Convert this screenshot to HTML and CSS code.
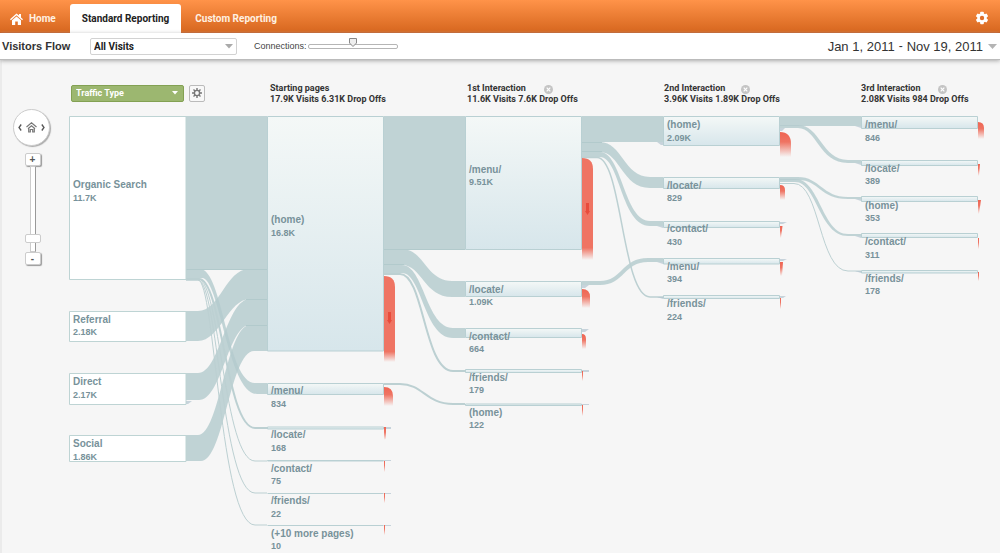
FILE: index.html
```
<!DOCTYPE html>
<html lang="en">

	<head>
		<meta charset="UTF-8">
		<title>Visitors Flow</title>
		<link rel="stylesheet" href="styles.css">
	</head>

	<body>
		<header class="top">
			<nav class="tabs">
				<a class="tab home" href="#">
					<svg width="13" height="12" viewBox="0 0 13 12"><path d="M0 6.2 6.5 0.4 9 2.6V1h2v3.4l2 1.8-.9 1L6.5 2.3.9 7.2z" fill="#fff"/><path d="M2 7.3 6.5 3.4 11 7.3V12H7.8V8.5H5.2V12H2z" fill="#fff"/></svg>
					Home
				</a>
				<a class="tab active" href="#">Standard Reporting</a>
				<a class="tab" href="#">Custom Reporting</a>
			</nav>
			<button class="settings" aria-label="Settings">
				<svg width="14" height="14" viewBox="-7 -7 14 14"><g fill="#fff"><rect x="-1.8" y="-6.2" width="3.6" height="12.4" rx=".8"/><rect x="-1.8" y="-6.2" width="3.6" height="12.4" rx=".8" transform="rotate(60)"/><rect x="-1.8" y="-6.2" width="3.6" height="12.4" rx=".8" transform="rotate(120)"/></g><circle r="3.5" fill="none" stroke="#fff" stroke-width="2.6"/><circle r="2.2" fill="#df6f2b"/></svg>
			</button>
		</header>

		<div class="toolbar">
			<h1>Visitors Flow</h1>
			<select class="segment" aria-label="Segment">
				<option>All Visits</option>
			</select>
			<label class="conn-label" for="conn">Connections:</label>
			<input class="conn" id="conn" type="range" min="0" max="100" value="50">
			<button class="dates">
				<span>Jan 1, 2011</span><span class="dash">-</span><span>Nov 19, 2011</span>
				<svg class="arrow" width="9" height="5" viewBox="0 0 9 5"><path d="M0 0h9L4.5 5z" fill="#b4b4b4"/></svg>
			</button>
		</div>

		<main class="content">
			<aside class="controls">
				<div class="pad">
					<button aria-label="Left"><svg width="4" height="7" viewBox="0 0 4 7"><path d="M3.2.5 1 3.5l2.2 3" fill="none" stroke="#555" stroke-width="1.3"/></svg></button>
					<button aria-label="Start"><svg width="11" height="11" viewBox="0 0 11 11"><path d="M.5 5 5.5.9l5 4.1M2 6.8l3.5-3 3.5 3M2.7 6.5V10h1.6V7.5h2.4V10h1.6V6.5" fill="none" stroke="#777" stroke-width="1.2"/></svg></button>
					<button aria-label="Right"><svg width="4" height="7" viewBox="0 0 4 7"><path d="M.8.5 3 3.5l-2.2 3" fill="none" stroke="#555" stroke-width="1.3"/></svg></button>
				</div>
				<div class="zoom">
					<button>+</button>
					<input type="range" min="0" max="100" value="11" aria-label="Zoom">
					<button>-</button>
				</div>
			</aside>

			<section class="flow">
				<div class="heads">
					<div class="dimension">
						<select class="type" aria-label="Dimension">
							<option>Traffic Type</option>
						</select>
						<button class="gear" aria-label="Dimension settings">
							<svg width="10" height="10" viewBox="-5 -5 10 10"><g stroke="#777" stroke-width="1.4"><path d="M0-5V5M-5 0H5M-3.5-3.5l7 7M-3.5 3.5l7-7"/></g><circle r="2.6" fill="#f8f8f8" stroke="#777" stroke-width="1.4"/></svg>
						</button>
					</div>
					<div class="head">
						<h2>Starting pages</h2>
						<p>17.9K Visits 6.31K Drop Offs</p>
					</div>
					<div class="head">
						<h2>1st Interaction</h2>
						<p>11.6K Visits 7.6K Drop Offs</p>
						<button class="close" aria-label="Remove"><svg width="9" height="9" viewBox="0 0 9 9"><circle cx="4.5" cy="4.5" r="4.5" fill="#c4c4c4"/><path d="M2.7 2.7l3.6 3.6M6.3 2.7 2.7 6.3" stroke="#fff" stroke-width="1.2"/></svg></button>
					</div>
					<div class="head">
						<h2>2nd Interaction</h2>
						<p>3.96K Visits 1.89K Drop Offs</p>
						<button class="close" aria-label="Remove"><svg width="9" height="9" viewBox="0 0 9 9"><circle cx="4.5" cy="4.5" r="4.5" fill="#c4c4c4"/><path d="M2.7 2.7l3.6 3.6M6.3 2.7 2.7 6.3" stroke="#fff" stroke-width="1.2"/></svg></button>
					</div>
					<div class="head">
						<h2>3rd Interaction</h2>
						<p>2.08K Visits 984 Drop Offs</p>
						<button class="close" aria-label="Remove"><svg width="9" height="9" viewBox="0 0 9 9"><circle cx="4.5" cy="4.5" r="4.5" fill="#c4c4c4"/><path d="M2.7 2.7l3.6 3.6M6.3 2.7 2.7 6.3" stroke="#fff" stroke-width="1.2"/></svg></button>
					</div>
				</div>

				<svg class="chart" width="931" height="443" viewBox="69 110 931 443">
					<defs>
						<linearGradient id="box" x1="0" y1="0" x2="0" y2="1">
							<stop offset="0" stop-color="#f4f8f7"/>
							<stop offset="1" stop-color="#d7e6eb"/>
						</linearGradient>
						<linearGradient id="drop" x1="0" y1="0" x2="0" y2="1">
							<stop offset="0" stop-color="#ef7463"/>
							<stop offset=".88" stop-color="#ef7463"/>
							<stop offset="1" stop-color="#ef7463" stop-opacity="0"/>
						</linearGradient>
						<linearGradient id="dropSmall" x1="0" y1="0" x2="0" y2="1">
							<stop offset="0" stop-color="#ef6553"/>
							<stop offset=".4" stop-color="#ef7463"/>
							<stop offset="1" stop-color="#ef7463" stop-opacity="0"/>
						</linearGradient>
					</defs>

					<!-- traffic type -> starting pages -->
					<g class="ribbon">
						<path d="M186 116H267V269H186z"/>
						<path d="M186 311H198C220 311 226 269 249 269H267V299H250C228 299 220 341 198 341H186z"/>
						<path d="M186 373H198C220 373 226 299 250 299H267V325H250C228 325 222 400 199 400H186z"/>
						<path d="M186 435H198C220 435 226 325 250 325H267V351H254C230 351 224 461 201 461H186z"/>
						<path d="M186 269H200C223 269 227 383 255 383H267V394H257C228 394 220 278 202 278H186z"/>
					</g>
					<g class="line">
						<path d="M186 279H199C222 279 226 428 255 428H267" stroke-width="2"/>
						<path d="M186 279H198C220 279 224 461 255 461H267"/>
						<path d="M186 280H198C218 280 222 493 255 493H267"/>
						<path d="M186 280H198C215 280 220 525 255 525H267"/>
					</g>

					<!-- starting pages -> 1st interaction -->
					<g class="ribbon">
						<path d="M384 116H465V249H384z"/>
						<path d="M384 249H402C424 249 426 281 452 281H465V297H452C424 297 422 265 402 265H384z"/>
						<path d="M384 265H402C424 265 426 328 453 328H465V338H453C424 338 422 273 402 273H384z"/>
					</g>
					<g class="line">
						<path d="M384 274H400C424 274 424 371 453 371H465" stroke-width="2"/>
						<path d="M384 384H400C423 384 426 404 453 404H465" stroke-width="2"/>
					</g>

					<!-- 1st -> 2nd interaction -->
					<g class="ribbon">
						<path d="M582 116H663V142H582z"/>
						<path d="M582 142H600C622 142 624 177 650 177H663V188H650C622 188 620 152 600 152H582z"/>
						<path d="M582 152H600C622 152 624 221 650 221H663V226H650C621 226 620 157 600 157H582z"/>
						<path d="M582 281H600C622 281 622 258 648 258H663V262H648C624 262 624 285 600 285H582z"/>
					</g>
					<g class="line">
						<path d="M582 157.5H597C622 157.5 622 297 650 297H663" stroke-width="1.5"/>
					</g>

					<!-- 2nd -> 3rd interaction -->
					<g class="ribbon">
						<path d="M780 116H861V126H780z"/>
						<path d="M780 125H798C820 125 822 160 848 160H861V163H848C819 163 817 128 798 128H780z"/>
						<path d="M780 177H798C820 177 822 197 848 197H861V199H848C819 199 820 180 798 180H780z"/>
						<path d="M780 179H795C820 179 822 234 848 234H861V236H848C819 236 817 182 795 182H780z"/>
					</g>
					<g class="line">
						<path d="M780 183.5H794C820 183.5 819 271 848 271H861"/>
					</g>

					<path class="seam" d="M186 269.500H267M246 299.500H267M246 325.500H267M384 249.500H465M384 264.500H404M582 142.500H602M582 151.500H602"/>

					<!-- shade where a band is thinner than its box -->
					<path class="shade" d="M186 401h6l-4 3h-2zM582 285h7l-4 3h-3zM582 329h7l-4 3h-3zM780 128h5l-3 3h-2zM780 222h7l-4 2h-3zM780 259h7l-4 2h-3zM780 296h6l-3 2h-3zM384 427h7v2h-7zM384 460h7v1h-7zM384 493h7v1h-7zM384 525h7v1h-7zM582 370h7v2h-7zM582 404h7v1h-7z"/>
					<path class="shade" d="M657 142h6v3h-2zM657 226h6v2zM657 262h6v2zM657 297h6v2zM855 126h6v2zM855 163h6v2zM855 199h6v2zM855 236h6v2zM855 271h6v2z"/>

					<!-- boxes -->
					<g class="source">
						<path d="M69.5 116.5H186V279.5H69.5z"/>
						<path d="M69.5 311.5H186V341.5H69.5z"/>
						<path d="M69.5 373.5H186V404.5H69.5z"/>
						<path d="M69.5 435.5H186V461.5H69.5z"/>
					</g>
					<g class="box">
						<path d="M267.5 116.5H383.5V351H267.5z"/>
						<path d="M267.5 383.5H383.5V394.5H267.5z"/>
						<path d="M267.5 427H383.5V429H267.5z"/>
						<path d="M267.5 460.5H383.5V461H267.5z"/>
						<path d="M267.5 493.5H383.5"/>
						<path d="M267.5 525.5H383.5"/>

						<path d="M465.5 116.5H581.5V249.5H465.5z"/>
						<path d="M465.5 281.5H581.5V296.5H465.5z"/>
						<path d="M465.5 328.5H581.5V337.5H465.5z"/>
						<path d="M465.5 369.5H581.5V372.5H465.5z"/>
						<path d="M465.5 404H581.5V405.5H465.5z"/>

						<path d="M663.5 116.5H779.5V145.5H663.5z"/>
						<path d="M663.5 177.5H779.5V188.5H663.5z"/>
						<path d="M663.5 221.5H779.5V227.5H663.5z"/>
						<path d="M663.5 258.5H779.5V264H663.5z"/>
						<path d="M663.5 295.5H779.5V298.5H663.5z"/>

						<path d="M861.5 116.5H977.5V128.5H861.5z"/>
						<path d="M861.5 160.5H977.5V165.5H861.5z"/>
						<path d="M861.5 196.5H977.5V201.5H861.5z"/>
						<path d="M861.5 233.5H977.5V237.5H861.5z"/>
						<path d="M861.5 270.5H977.5V273H861.5z"/>
					</g>

					<!-- drop offs -->
					<g fill="url(#drop)">
						<path d="M384 276Q395 276 395 287V362H384z"/>
						<path d="M582 158Q593 158 593 169V260H582z"/>
					</g>
					<g fill="url(#dropSmall)">
						<path d="M780 132Q791 132 791 144V157H780z"/>
						<path d="M384 387Q393 387 393 396V406H384z"/>
						<path d="M384 427H386V439L384 440z"/>
						<path d="M384 461H385V472H384z"/>
						<path d="M384 493H385V503H384z"/>
						<path d="M384 525H385V535H384z"/>
						<path d="M582 289Q590 289 590 297V308H582z"/>
						<path d="M582 334Q586 334 586 339V349H582z"/>
						<path d="M582 371H583V381H582z"/>
						<path d="M582 405H583V416H582z"/>
						<path d="M780 185Q785 185 785 190V200H780z"/>
						<path d="M780 226H782.5L781 238H780z"/>
						<path d="M780 262H783L782 276H780z"/>
						<path d="M780 298H781V309H780z"/>
						<path d="M978 122Q984 122 984 128V139H978z"/>
						<path d="M978 164H980L979 176H978z"/>
						<path d="M978 200H981L979 214H978z"/>
						<path d="M978 238H979V249H978z"/>
						<path d="M978 272H979V281H978z"/>
					</g>
					<path fill="#e84c3c" d="M388 312h3v8h1l-2.5 4-2.5-4h1zM586 203h3v8h1l-2.5 4-2.5-4h1z"/>

					<g class="name">
						<text x="73" y="188">Organic Search</text>
						<text x="73" y="323">Referral</text>
						<text x="73" y="385">Direct</text>
						<text x="73" y="447">Social</text>
						<text x="271" y="223">(home)</text>
						<text x="271" y="394">/menu/</text>
						<text x="271" y="438">/locate/</text>
						<text x="271" y="472">/contact/</text>
						<text x="271" y="504">/friends/</text>
						<text x="271" y="537">(+10 more pages)</text>
						<text x="469" y="173">/menu/</text>
						<text x="469" y="293">/locate/</text>
						<text x="469" y="340">/contact/</text>
						<text x="469" y="381">/friends/</text>
						<text x="469" y="416">(home)</text>
						<text x="667" y="128">(home)</text>
						<text x="667" y="189">/locate/</text>
						<text x="667" y="232">/contact/</text>
						<text x="667" y="270">/menu/</text>
						<text x="667" y="307">/friends/</text>
						<text x="865" y="128">/menu/</text>
						<text x="865" y="172">/locate/</text>
						<text x="865" y="209">(home)</text>
						<text x="865" y="245">/contact/</text>
						<text x="865" y="282">/friends/</text>
					</g>
					<g class="value">
						<text x="73" y="201">11.7K</text>
						<text x="73" y="335">2.18K</text>
						<text x="73" y="398">2.17K</text>
						<text x="73" y="460">1.86K</text>
						<text x="271" y="236">16.8K</text>
						<text x="271" y="407">834</text>
						<text x="271" y="451">168</text>
						<text x="271" y="484">75</text>
						<text x="271" y="517">22</text>
						<text x="271" y="549">10</text>
						<text x="469" y="185">9.51K</text>
						<text x="469" y="305">1.09K</text>
						<text x="469" y="352">664</text>
						<text x="469" y="393">179</text>
						<text x="469" y="428">122</text>
						<text x="667" y="141">2.09K</text>
						<text x="667" y="201">829</text>
						<text x="667" y="245">430</text>
						<text x="667" y="282">394</text>
						<text x="667" y="320">224</text>
						<text x="865" y="141">846</text>
						<text x="865" y="184">389</text>
						<text x="865" y="221">353</text>
						<text x="865" y="258">311</text>
						<text x="865" y="294">178</text>
					</g>
				</svg>
			</section>
		</main>
	</body>

</html>
```

FILE: styles.css
```
* {
	padding: 0;
	margin: 0;
	box-sizing: border-box;
}

body {
	font-family: "Liberation Sans", Arial, sans-serif;
	font-size: 9px;
	color: #333;
	background: #f6f6f6;
	overflow-x: hidden;
}

button {
	background: none;
	border: none;
	font-family: inherit;
	cursor: pointer;
}

svg {
	display: block;
}

.top {
	display: flex;
	justify-content: space-between;
	height: 33px;
	background: linear-gradient(#ff9349, #d7671f);
	border-bottom: 1px solid #c9591a;
	padding-top: 4px;
}

.tabs {
	display: flex;
	height: 29px;
}

.tab {
	display: flex;
	align-items: center;
	gap: 6px;
	padding: 0 14px;
	font-family: Roboto, Arial, sans-serif;
	font-size: 10px;
	font-weight: bold;
	color: #fff1e2;
	text-decoration: none;
}

.tab.home {
	padding-left: 10px;
}

.tab.active {
	padding: 0 12px;
	background: #fff;
	color: #222;
	border-radius: 3px 3px 0 0;
}

.settings {
	padding-right: 11px;
}

.toolbar {
	display: flex;
	align-items: center;
	height: 27px;
	padding-left: 2px;
	background: #fff;
	border-bottom: 1px solid #bbb;
	box-shadow: 0 1px 4px #aaa;
	position: relative;
}

h1 {
	font-size: 11px;
	width: 88px;
}

.segment {
	appearance: none;
	width: 147px;
	height: 17px;
	padding-left: 3px;
	border: 1px solid #d2d2d2;
	border-radius: 2px;
	background: #fff url('data:image/svg+xml,<svg xmlns="http://www.w3.org/2000/svg" width="8" height="5"><path d="M0 0h8L4 4.5z" fill="%23aaa"/></svg>') no-repeat right 3px center;
	font-family: Roboto, Arial, sans-serif;
	font-size: 10px;
	font-weight: bold;
	color: #222;
}

.conn-label {
	margin-left: 17px;
	margin-right: 1px;
	color: #444;
}

.conn {
	appearance: none;
	width: 90px;
	height: 17px;
	background: none;
}

.conn::-webkit-slider-runnable-track {
	height: 5px;
	border: 1px solid #b5b5b5;
	border-radius: 2px;
	background: #fff;
}

.conn::-webkit-slider-thumb {
	appearance: none;
	width: 8px;
	height: 9px;
	margin-top: -7px;
	background: url('data:image/svg+xml,<svg xmlns="http://www.w3.org/2000/svg" width="8" height="9"><path d="M.5.5h7V5L4 8.5.5 5z" fill="%23eee" stroke="%23888"/></svg>');
}

.dates {
	display: flex;
	align-items: center;
	gap: 4px;
	margin-left: auto;
	font-size: 13px;
	color: #333;
}

.dash {
	font-size: 12px;
}

.arrow {
	margin: 0 3px 0 1px;
}

.content {
	display: flex;
	border-left: 2px solid #ebebeb;
}

.controls {
	flex: none;
	width: 67px;
	padding: 49px 0 0 11px;
}

.pad {
	display: flex;
	align-items: center;
	justify-content: center;
	gap: 4px;
	width: 37px;
	height: 37px;
	border: 1px solid #ccc;
	border-radius: 50%;
	background: #fff;
	box-shadow: 1px 1px 1px #aaa;
}

.zoom {
	display: flex;
	flex-direction: column;
	align-items: center;
	width: 39px;
	margin-top: 7px;
}

.zoom button {
	width: 16px;
	height: 13px;
	border: 1px solid #ccc;
	border-radius: 2px;
	background: #fff;
	box-shadow: 1px 1px 1px #999;
	font-size: 10px;
	font-weight: bold;
	line-height: 11px;
	color: #555;
}

.zoom input {
	appearance: none;
	writing-mode: vertical-lr;
	direction: rtl;
	width: 16px;
	height: 86px;
	background: none;
}

.zoom input::-webkit-slider-runnable-track {
	width: 6px;
	border: 1px solid #ccc;
	border-right-color: #999;
	background: #fff;
}

.zoom input::-webkit-slider-thumb {
	appearance: none;
	width: 16px;
	height: 9px;
	margin-left: -6px;
	border: 1px solid #ccc;
	border-radius: 2px;
	background: #fff;
}

.flow {
	flex: 1;
	min-width: 0;
}

.heads {
	display: grid;
	grid-template-columns: 201px repeat(3, 197px) 1fr;
	height: 50px;
	padding-top: 22px;
}

.dimension {
	display: flex;
	align-items: center;
	gap: 5px;
	height: 22px;
	padding-left: 2px;
}

.type {
	appearance: none;
	width: 113px;
	height: 17px;
	padding-left: 4px;
	border: 1px solid #83a153;
	border-radius: 2px;
	background: #9cb770 url('data:image/svg+xml,<svg xmlns="http://www.w3.org/2000/svg" width="6" height="4"><path d="M0 0h6L3 3.5z" fill="white"/></svg>') no-repeat right 5px center;
	font-family: Roboto, Arial, sans-serif;
	font-size: 9px;
	font-weight: bold;
	color: #fff;
}

.gear {
	display: grid;
	place-items: center;
	width: 16px;
	height: 17px;
	border: 1px solid #bbb;
	border-radius: 2px;
	background: #f8f8f8;
}

.head {
	position: relative;
	padding-top: 1px;
	font-family: Roboto, Arial, sans-serif;
	font-weight: bold;
	line-height: 11px;
}

.head h2 {
	font-size: 9px;
}

.close {
	position: absolute;
	top: 3px;
	left: 77px;
}

.ribbon {
	fill: #b3cacd;
	fill-opacity: .8;
}

.line {
	fill: none;
	stroke: #bcd0d2;
}

.seam {
	fill: none;
	stroke: #b2cacc;
}

.shade {
	fill: #a9bdca;
	fill-opacity: .6;
}

.source {
	fill: #fff;
	stroke: #bed4d4;
}

.box {
	fill: url(#box);
	stroke: #b9d0d3;
}

.name,
.value {
	font-size: 10px;
	font-weight: bold;
	fill: #78929a;
}

.value {
	font-size: 9px;
}
```
